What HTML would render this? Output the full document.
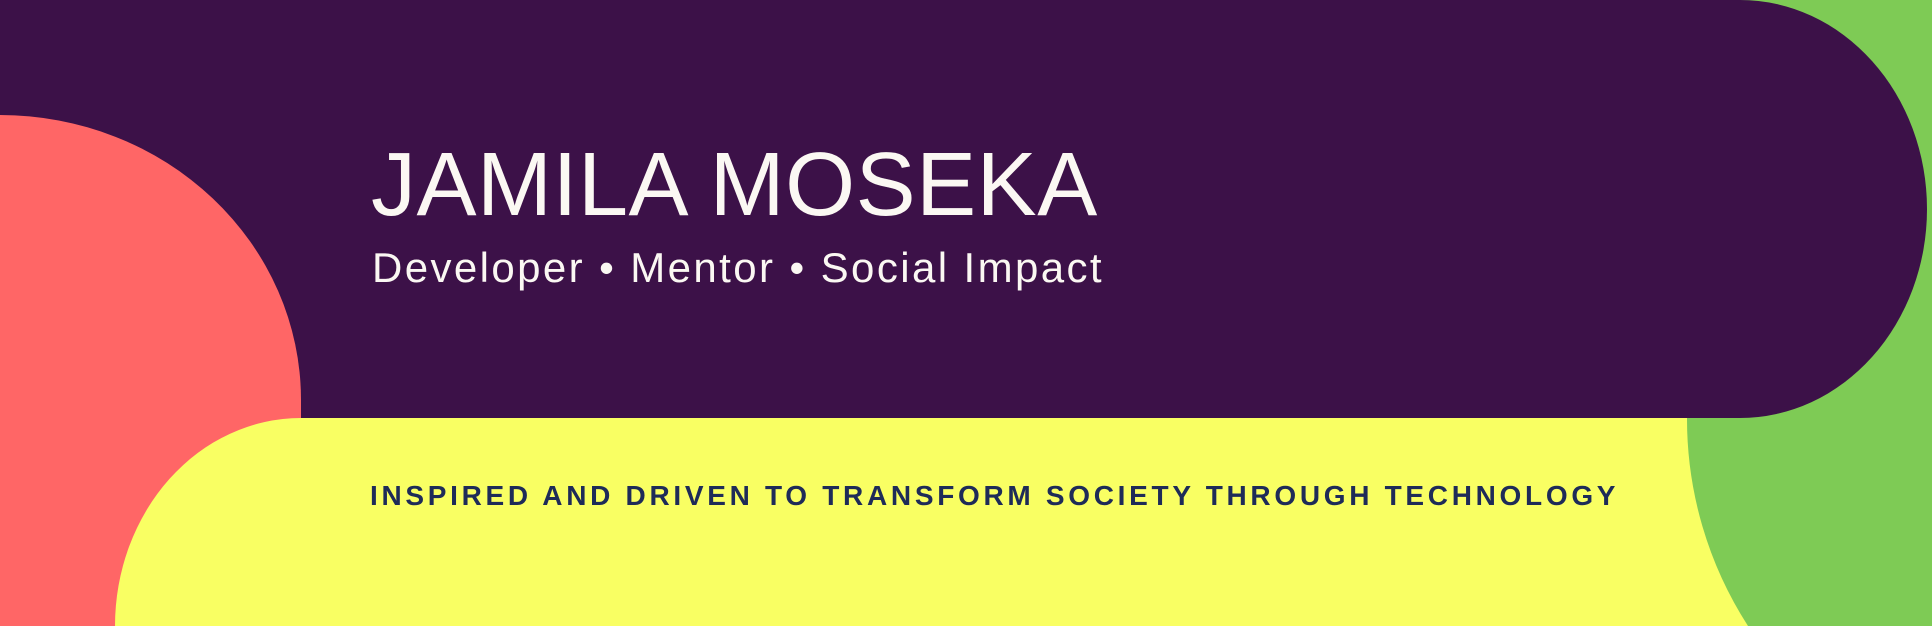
<!DOCTYPE html>
<html><head><meta charset="utf-8"><style>
html,body{margin:0;padding:0;width:1932px;height:626px;overflow:hidden;background:#f9ff63;}
#w{position:relative;width:1932px;height:626px;overflow:hidden;}
.abs{position:absolute;}
svg{position:absolute;left:0;top:0;}
</style></head><body><div id="w">
<svg width="1932" height="626" viewBox="0 0 1932 626">
<rect width="1932" height="626" fill="#7ecb55"/>
<path d="M0,0 H1740 A187,209 0 0 1 1927,209 A187,209 0 0 1 1740,418 H0 Z" fill="#3c1148"/>
<path d="M0,115 A301,285 0 0 1 301,400 L301,626 L0,626 Z" fill="#ff6666"/>
<path d="M301,418 H1687 A382,382 0 0 0 1748,626 H115 A186,208 0 0 1 301,418 Z" fill="#f9ff63"/>
</svg>
<div class="abs" style="left:371px;top:133px;font-family:'Liberation Sans',sans-serif;font-size:90px;line-height:105px;color:#fbf8f3;letter-spacing:0.5px;white-space:nowrap;">JAMILA MOSEKA</div>
<div class="abs" style="left:372px;top:243px;font-family:'Liberation Sans',sans-serif;font-size:42px;line-height:50px;color:#fbf8f3;white-space:nowrap;letter-spacing:2.4px;">Developer • Mentor • Social Impact</div>
<div class="abs" style="left:370px;top:479px;font-family:'Liberation Sans',sans-serif;font-weight:bold;font-size:28px;line-height:34px;color:#1e2b58;white-space:nowrap;letter-spacing:3.7px;">INSPIRED AND DRIVEN TO TRANSFORM SOCIETY THROUGH TECHNOLOGY</div>
</div></body></html>
